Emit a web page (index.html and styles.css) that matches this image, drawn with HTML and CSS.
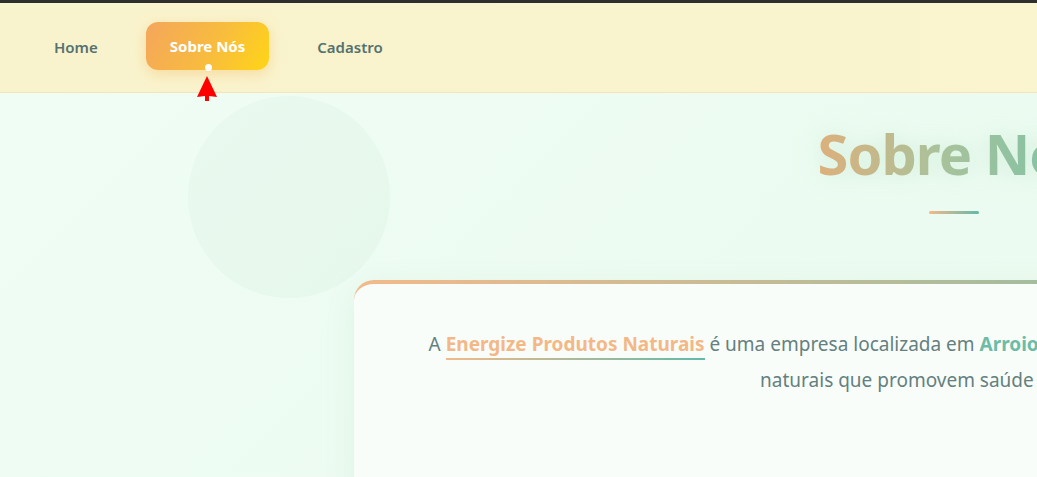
FILE: index.html
```html
<!DOCTYPE html>
<html lang="pt-BR">
<head>
<meta charset="utf-8">
<title>Sobre Nós - Energize Produtos Naturais</title>
<link rel="stylesheet" href="styles.css">
</head>
<body>
<div class="page">
  <header class="topbar">
    <nav class="nav">
      <a class="nav-item" href="#">Home</a>
      <a class="nav-item active" href="#">Sobre Nós</a>
      <a class="nav-item" href="#">Cadastro</a>
    </nav>
    <svg class="cursor" width="22" height="27" viewBox="0 0 22 27" aria-hidden="true">
      <path d="M11 0 L21 21 L13 20 L13 25 L9 25 L9 20 L1 21 Z" fill="#ff0000"/>
    </svg>
  </header>
  <main class="main">
    <div class="blob"></div>
    <section class="about">
      <h1 class="title">Sobre Nós</h1>
      <div class="title-bar"></div>
      <article class="card">
        <p class="lead"><span class="line">A <strong class="brand">Energize Produtos Naturais</strong> é uma empresa localizada em <strong class="place">Arroio do Meio</strong>, especializada na produção de produtos</span><br>naturais que promovem saúde e bem-estar.</p>
      </article>
    </section>
  </main>
</div>
</body>
</html>
```

FILE: styles.css
```css
html, body {
  margin: 0;
  padding: 0;
  overflow: hidden;
}
body {
  font-family: "Noto Sans", "Open Sans", sans-serif;
  background: #eefcf3;
}
.page {
  width: 1908px;
  min-height: 477px;
  border-top: 3px solid #2e2e2e;
}
.topbar {
  position: relative;
  background: linear-gradient(90deg, #f9f3cd 0%, #faf5d0 100%);
  border-bottom: 1px solid #f6e3b8;
  box-sizing: border-box;
  padding: 0 0 4px 30px;
  height: 90px;
  display: flex;
  align-items: center;
}
.nav {
  display: flex;
  gap: 24px;
  align-items: center;
}
.nav-item {
  position: relative;
  display: block;
  padding: 0 24px;
  height: 48px;
  line-height: 50px;
  border-radius: 12px;
  font-size: 15px;
  font-weight: 600;
  color: #557270;
  text-decoration: none;
}
.nav-item.active {
  color: #ffffff;
  font-weight: 700;
  line-height: 49px;
  background: linear-gradient(120deg, #f4a65c 0%, #f8bc3e 55%, #ffd516 100%);
  box-shadow: 0 4px 14px rgba(246, 176, 70, 0.35);
}
.nav-item.active::after {
  content: "";
  position: absolute;
  left: 50%;
  bottom: -1px;
  width: 7px;
  height: 7px;
  margin-left: -3px;
  border-radius: 50%;
  background: #ffffff;
}
.cursor {
  position: absolute;
  left: 196px;
  top: 73px;
  z-index: 5;
}
.main {
  position: relative;
  background: linear-gradient(135deg, #effdf4 0%, #ecfbf1 45%, #f1fbf3 100%);
  min-height: 385px;
  padding-top: 20px;
}
.blob {
  position: absolute;
  left: 188px;
  top: 3px;
  width: 202px;
  height: 202px;
  border-radius: 50%;
  background: linear-gradient(135deg, #e9f9ef 0%, #e6f7ec 100%);
}
.about {
  position: relative;
  width: 1200px;
  margin: 0 auto;
  display: flex;
  flex-direction: column;
  align-items: center;
}
.title {
  margin: 0;
  font-size: 56px;
  letter-spacing: -1px;
  line-height: 80px;
  font-weight: 700;
  background: linear-gradient(90deg, #dcb07c 0%, #a9c29b 45%, #78c2a6 100%);
  -webkit-background-clip: text;
  background-clip: text;
  color: transparent;
  filter: drop-shadow(0 0 12px rgba(190, 230, 200, 0.6));
}
.title-bar {
  width: 50px;
  height: 3px;
  margin-top: 18px;
  border-radius: 2px;
  background: linear-gradient(90deg, #f3b98a, #63b9a9);
}
.card {
  align-self: stretch;
  margin-top: 66px;
  background: #f8fdfa;
  border-radius: 20px;
  border-top: 4px solid transparent;
  background-image: linear-gradient(#f8fdfa, #f8fdfa), linear-gradient(90deg, #f3b98a 0%, #a0bd9f 60%, #6dbaa8 100%);
  background-origin: border-box;
  background-clip: padding-box, border-box;
  box-shadow: 0 8px 30px rgba(120, 170, 140, 0.12);
  padding: 42px 60px 60px;
  min-height: 200px;
}
.lead {
  margin: 0;
  text-align: center;
  font-size: 19px;
  line-height: 36px;
  color: #64807f;
}
.line {
  white-space: nowrap;
}
.brand {
  color: #f4b887;
  font-weight: 700;
  background: linear-gradient(90deg, #f3b98a, #63b9a9) no-repeat left bottom / 100% 2px;
  padding-bottom: 3px;
}
.place {
  color: #6cbca7;
  font-weight: 700;
}
```
